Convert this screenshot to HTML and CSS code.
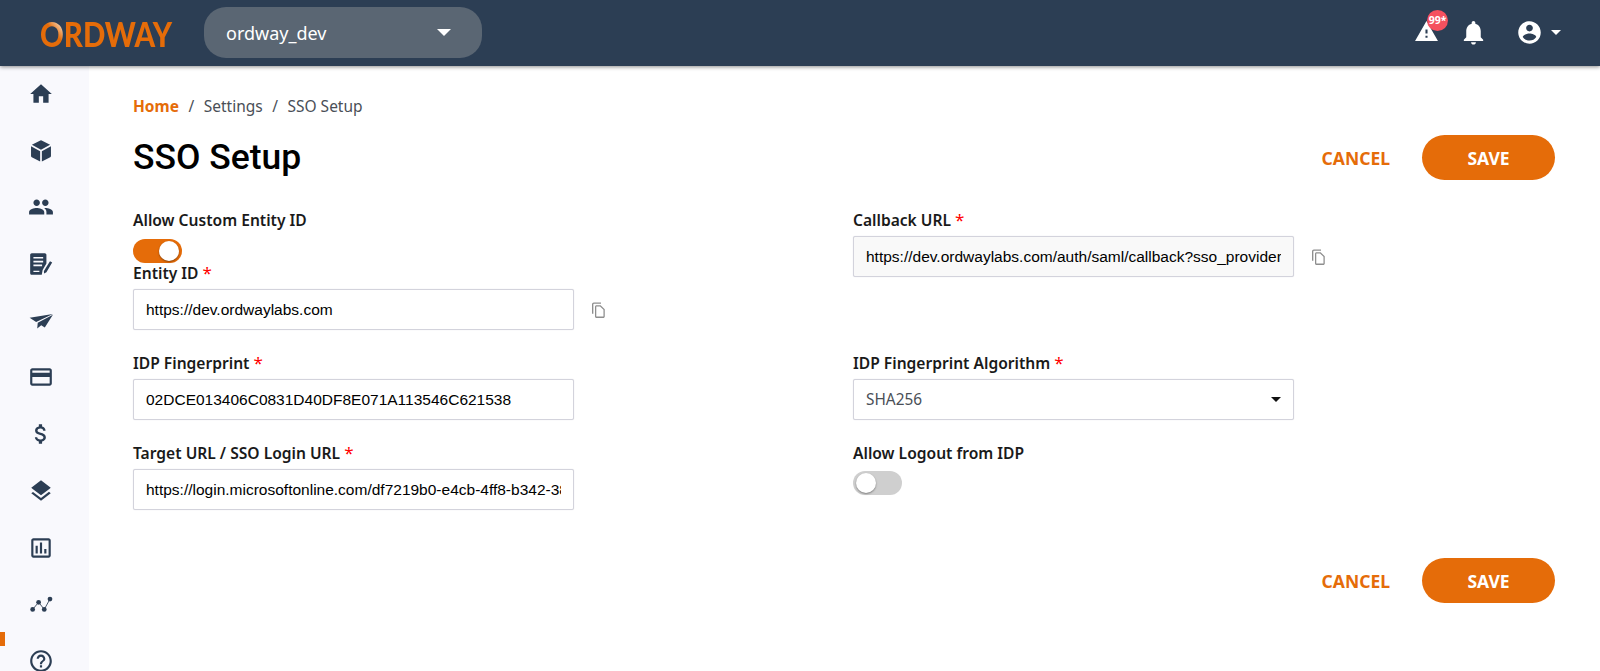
FILE: index.html
```html
<!DOCTYPE html>
<html lang="en">
<head>
<meta charset="utf-8">
<title>SSO Setup</title>
<link rel="stylesheet" href="styles.css">
</head>
<body>
<header class="topbar">
  <div class="logo"><span class="logo-text"><span class="logo-o">O</span>RDWAY</span></div>
  <div class="tenant"><span>ordway_dev</span><i class="caret caret-lg"></i></div>
  <div class="top-actions">
    <div class="alert">
      <svg class="top-icon warn" viewBox="0 0 24 24"><path d="M1 21h22L12 2 1 21zm12-3h-2v-2h2v2zm0-4h-2v-4h2v4z"/></svg>
      <span class="badge">99*</span>
    </div>
    <svg class="top-icon bell" viewBox="0 0 24 24"><path d="M12 22c1.100 0 2-.9 2-2h-4c0 1.100.89 2 2 2zm6-6v-5c0-3.070-1.640-5.640-4.500-6.320V4c0-.83-.67-1.500-1.500-1.500s-1.500.67-1.500 1.500v.68C7.630 5.360 6 7.920 6 11v5l-2 2v1h16v-1l-2-2z"/></svg>
    <svg class="top-icon account" viewBox="0 0 24 24"><path d="M12 2C6.480 2 2 6.480 2 12s4.480 10 10 10 10-4.480 10-10S17.520 2 12 2zm0 3c1.660 0 3 1.340 3 3s-1.340 3-3 3-3-1.340-3-3 1.340-3 3-3zm0 14.200c-2.500 0-4.710-1.280-6-3.220.03-1.990 4-3.080 6-3.080 1.990 0 5.970 1.090 6 3.080-1.290 1.940-3.500 3.220-6 3.220z"/></svg>
    <i class="caret caret-sm"></i>
  </div>
</header>
<div class="layout">
  <nav class="sidebar">
    <svg class="nav-icon" viewBox="0 0 24 24"><path d="M10 20v-6h4v6h5v-8h3L12 3 2 12h3v8z"/></svg>
    <svg class="nav-icon" viewBox="0 0 24 24"><path d="M11.400 2.300 3.600 6.300 12 10.900l8.400-4.600-7.800-4a1.400 1.400 0 0 0-1.200 0zM2.800 7.700v8.900c0 .5.3 1 .7 1.200l7.700 4V12.200zM21.200 7.700l-8.400 4.500v9.600l7.700-4c.4-.2.7-.7.7-1.200z"/></svg>
    <svg class="nav-icon" viewBox="0 0 24 24"><path d="M16 11c1.660 0 2.990-1.340 2.990-3S17.660 5 16 5c-1.660 0-3 1.340-3 3s1.340 3 3 3zm-8 0c1.660 0 2.990-1.340 2.990-3S9.660 5 8 5C6.340 5 5 6.340 5 8s1.340 3 3 3zm0 2c-2.330 0-7 1.170-7 3.500V19h14v-2.500c0-2.330-4.670-3.500-7-3.500zm8 0c-.29 0-.62.02-.97.05 1.160.84 1.970 1.970 1.970 3.450V19h6v-2.500c0-2.330-4.670-3.500-7-3.500z"/></svg>
    <svg class="nav-icon" viewBox="0 0 24 24"><path d="M3.500 2h12c.8 0 1.500.7 1.500 1.500v8l-3.500 6-.8 4.500H3.500c-.8 0-1.500-.7-1.500-1.500v-17C2 2.700 2.700 2 3.500 2z"/><path class="nav-cut" d="M5 5.500h9V7H5zM5 9h9v1.500H5zM5 12.500h8V14H5zM5 18.300h5.500v1H5z"/><path d="M20.300 9.500l2 1.200-5.300 8.800-2.200 1.300-.1-2.400z"/></svg>
    <svg class="nav-icon" viewBox="0 0 24 24"><path d="M1.500 9 23 5.500 7.500 13zM9 13.500 23 6.200 15.500 18l-3.300-2L8.500 19z"/></svg>
    <svg class="nav-icon" viewBox="0 0 24 24"><path d="M20 4H4c-1.110 0-1.990.89-1.990 2L2 18c0 1.110.89 2 2 2h16c1.110 0 2-.89 2-2V6c0-1.110-.89-2-2-2zm0 14H4v-6h16v6zm0-10H4V6h16v2z"/></svg>
    <svg class="nav-icon" viewBox="0 0 24 24"><path d="M11.800 10.900c-2.270-.59-3-1.200-3-2.150 0-1.090 1.010-1.850 2.700-1.850 1.780 0 2.440.85 2.500 2.100h2.210c-.07-1.720-1.120-3.300-3.210-3.810V3h-3v2.160c-1.940.42-3.500 1.680-3.500 3.610 0 2.310 1.910 3.460 4.700 4.130 2.500.6 3 1.480 3 2.410 0 .69-.49 1.790-2.700 1.790-2.060 0-2.870-.92-2.980-2.100h-2.200c.12 2.190 1.760 3.420 3.680 3.830V21h3v-2.150c1.950-.37 3.500-1.500 3.500-3.550 0-2.840-2.430-3.810-4.700-4.400z"/></svg>
    <svg class="nav-icon" viewBox="0 0 24 24"><path d="M11.990 18.540l-7.370-5.730L3 14.070l9 7 9-7-1.630-1.270-7.380 5.740zM12 16l7.360-5.730L21 9l-9-7-9 7 1.630 1.270L12 16z"/></svg>
    <svg class="nav-icon" viewBox="0 0 24 24"><path d="M19 3H5c-1.100 0-2 .9-2 2v14c0 1.100.9 2 2 2h14c1.100 0 2-.9 2-2V5c0-1.100-.9-2-2-2zm0 16H5V5h14v14z"/><path d="M7 10h2v7H7zm4-3h2v10h-2zm4 6h2v4h-2z"/></svg>
    <svg class="nav-icon" viewBox="0 0 24 24"><circle cx="4.300" cy="17" r="2.200"/><circle cx="9.800" cy="10.400" r="2.200"/><circle cx="15" cy="17" r="2.200"/><circle cx="20.300" cy="7.400" r="2.200"/><path class="nav-line" d="M4.300 17 9.800 10.400 15 17 20.300 7.400"/></svg>
    <svg class="nav-icon" viewBox="0 0 24 24"><path d="M11 18h2v-2h-2v2zm1-16C6.480 2 2 6.480 2 12s4.480 10 10 10 10-4.480 10-10S17.520 2 12 2zm0 18c-4.410 0-8-3.590-8-8s3.590-8 8-8 8 3.590 8 8-3.590 8-8 8zm0-14c-2.210 0-4 1.790-4 4h2c0-1.100.9-2 2-2s2 .9 2 2c0 2-3 1.750-3 5h2c0-2.250 3-2.500 3-5 0-2.210-1.790-4-4-4z"/></svg>
    <span class="nav-marker"></span>
  </nav>
  <main class="content">
    <div class="crumbs"><a class="crumb-home">Home</a><span class="sep">/</span><span>Settings</span><span class="sep">/</span><span>SSO Setup</span></div>
    <div class="title-row">
      <h1>SSO Setup</h1>
      <div class="actions"><button class="cancel">CANCEL</button><button class="save">SAVE</button></div>
    </div>
    <form class="form-grid">
      <div class="field">
        <div class="label">Allow Custom Entity ID</div>
        <div class="toggle on"><span class="knob"></span></div>
        <label class="label after-toggle">Entity ID <b>*</b></label>
        <div class="input-row">
          <input class="text-input" value="https://dev.ordwaylabs.com">
          <svg class="copy" viewBox="0 0 24 24"><path d="M16 2H6.500C5.100 2 4 3.100 4 4.500V17h1.800V4.500c0-.4.3-.7.7-.7H16z"/><path d="M15.500 5.500H10C8.900 5.500 8 6.400 8 7.500v13C8 21.600 8.900 22.500 10 22.500h9c1.100 0 2-.9 2-2V11zM19.300 20.500c0 .2-.1.3-.3.3h-9c-.2 0-.3-.1-.3-.3v-13c0-.2.1-.3.3-.3h4.700l4.600 4.600z"/></svg>
        </div>
      </div>
      <div class="field">
        <label class="label">Callback URL <b>*</b></label>
        <div class="input-row">
          <input class="text-input readonly" readonly value="https://dev.ordwaylabs.com/auth/saml/callback?sso_provider">
          <svg class="copy" viewBox="0 0 24 24"><path d="M16 2H6.500C5.100 2 4 3.100 4 4.500V17h1.800V4.500c0-.4.3-.7.7-.7H16z"/><path d="M15.500 5.500H10C8.900 5.500 8 6.400 8 7.500v13C8 21.600 8.900 22.500 10 22.500h9c1.100 0 2-.9 2-2V11zM19.300 20.500c0 .2-.1.3-.3.3h-9c-.2 0-.3-.1-.3-.3v-13c0-.2.1-.3.3-.3h4.700l4.600 4.600z"/></svg>
        </div>
      </div>
      <div class="field">
        <label class="label">IDP Fingerprint <b>*</b></label>
        <input class="text-input" value="02DCE013406C0831D40DF8E071A113546C621538">
      </div>
      <div class="field">
        <label class="label">IDP Fingerprint Algorithm <b>*</b></label>
        <div class="select"><span>SHA256</span><i class="caret caret-dark"></i></div>
      </div>
      <div class="field">
        <label class="label">Target URL / SSO Login URL <b>*</b></label>
        <input class="text-input" value="https://login.microsoftonline.com/df7219b0-e4cb-4ff8-b342-38a1f2c1d9e0/saml2">
      </div>
      <div class="field">
        <div class="label">Allow Logout from IDP</div>
        <div class="toggle off"><span class="knob"></span></div>
      </div>
    </form>
    <div class="actions bottom"><button class="cancel">CANCEL</button><button class="save">SAVE</button></div>
  </main>
</div>
</body>
</html>
```
FILE: styles.css
```css
* { box-sizing: border-box; }
html, body { margin: 0; height: 100%; overflow: hidden; background: #fff; }
body { display: flex; flex-direction: column; font-family: "Noto Sans", sans-serif; color: #000; }

.topbar {
  position: relative; z-index: 2; flex: none; height: 66px; display: flex; align-items: center;
  background: #2c3e54; box-shadow: 0 1px 4px rgba(0,0,0,.45); padding: 0 39px 1px 40px;
}
.logo { width: 164px; height: 34px; }
.logo-text {
  display: inline-block; font-family: "Lato", sans-serif; font-weight: 900; font-size: 35px; line-height: 34px;
  letter-spacing: 0; color: #e56c09; transform: scaleX(.84); transform-origin: left center;
}
.logo-o {
  background: linear-gradient(45deg, #e56c09 55%, #f2c49a 75%);
  -webkit-background-clip: text; background-clip: text; color: transparent;
}
.tenant {
  width: 278px; height: 51px; border-radius: 22px; background: #5a6673; color: #fff; display: flex;
  align-items: center; justify-content: space-between; padding: 0 31px 0 22px; font-size: 18px;
}
.caret { display: block; width: 0; height: 0; border-style: solid; border-color: transparent; border-bottom-width: 0; }
.caret-lg { border-width: 7px 7.5px 0; border-top-color: #fff; }
.caret-sm { border-width: 5.5px 5.5px 0; border-top-color: #fff; margin-left: 8px; }
.caret-dark { border-width: 5px 5.500px 0; border-top-color: #111; }

.top-actions { margin-left: auto; display: flex; align-items: center; }
.top-icon { display: block; width: 27px; height: 27px; fill: #fff; }
.warn { width: 25px; height: 25px; }
.alert { position: relative; margin-right: 20px; margin-top: -3px; }
.badge {
  position: absolute; left: 13px; top: -9px; width: 21px; height: 21px; border-radius: 50%;
  background: #f5515f; color: #fff; font-size: 10.5px; font-weight: 700; line-height: 20px; text-align: center;
}
.bell { width: 29px; height: 29px; margin-right: 28px; }
.account { width: 27px; height: 27px; }

.layout { flex: 1; display: flex; min-height: 0; }
.sidebar {
  position: relative; flex: none; width: 89px; background: #f9f9fd; display: flex; flex-direction: column;
  align-items: center; padding: 15px 7px 0 0; gap: 30.700px; overflow: hidden;
}
.nav-icon { flex: none; display: block; width: 26px; height: 26px; fill: #2c3e54; }
.nav-cut { fill: #f9f9fd; }
.nav-line { fill: none; stroke: #2c3e54; stroke-width: .8; }
.nav-marker { position: absolute; left: 0; top: 566px; width: 5px; height: 14px; background: #e56c09; }

.content { flex: 1; min-width: 0; padding: 28px 45px 0 44px; }
.crumbs { display: flex; align-items: center; height: 24px; font-size: 15.500px; color: #4a4f57; }
.crumb-home { color: #e56c09; font-weight: 700; }
.sep { margin: 0 9.500px; }
.title-row { display: flex; align-items: center; justify-content: space-between; margin-top: 17px; height: 45px; }
h1 { margin: 0; font-family: Roboto, sans-serif; font-weight: 500; font-size: 35.500px; line-height: 45px; color: #000; }
.actions { display: flex; align-items: center; justify-content: flex-end; gap: 32px; }
.actions.bottom { margin-top: 48px; }
button { border: 0; background: none; padding: 0; font-family: "Noto Sans", sans-serif; font-weight: 700; font-size: 17.500px; cursor: pointer; }
.cancel { color: #e56c09; }
.save { width: 133px; height: 45px; border-radius: 23px; background: #e56c09; color: #fff; }

.form-grid { display: grid; grid-template-columns: 720px 1fr; row-gap: 22px; margin-top: 29px; }
.label { display: block; height: 22px; line-height: 22px; font-size: 15.600px; font-weight: 600; color: #1a1a1a; margin-bottom: 5px; }
.label b { color: #f00; font-weight: 400; font-size: 17px; }
.after-toggle { margin-top: -1px; margin-bottom: 5px; }
.input-row { display: flex; align-items: center; gap: 15px; }
.text-input, .select {
  display: block; width: 441px; height: 41px; padding: 0 12px; border: 1px solid #d3d3dc; border-radius: 2px;
  box-shadow: 0 0 1px #d3d3dc; outline: none; background: #fff;
  font-family: "Liberation Sans", sans-serif; font-size: 15.500px; color: #000;
}
.text-input.readonly { background: #f9f9f9; }
.select {
  display: flex; align-items: center; justify-content: space-between; padding-right: 12px;
  font-family: "Noto Sans", sans-serif; color: #4a4f57; font-size: 15.400px;
}
.copy { flex: none; width: 18px; height: 18px; fill: #8e8e8e; }
.toggle {
  position: relative; width: 49px; height: 24px; border-radius: 12px; background: #cfcfcf; margin-top: 8px;
}
.toggle.off { margin-top: 7px; }
.toggle.on { background: #e56c09; }
.knob {
  position: absolute; top: 2px; left: 3px; width: 20px; height: 20px; border-radius: 50%; background: #fff;
  box-shadow: 0 1px 2px rgba(0,0,0,.4);
}
.toggle.on .knob { left: 26px; }
```
